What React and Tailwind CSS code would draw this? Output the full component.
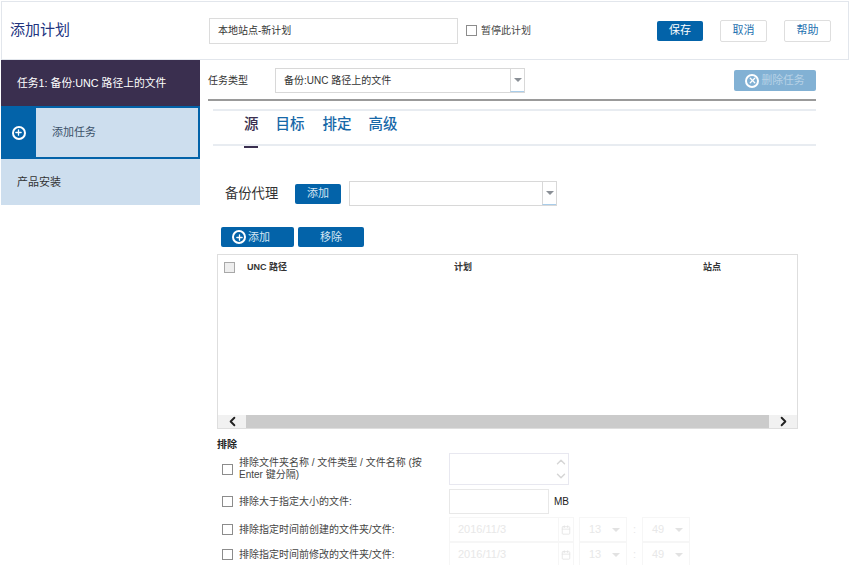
import React from 'react';
import { ChevronLeft, ChevronRight, ChevronUp, ChevronDown, Calendar, Plus, X } from 'lucide-react';

const font = { fontFamily: '"Liberation Sans", "Noto Sans CJK SC", sans-serif' };

function Caret({ className = 'border-t-[#8a8f96]' }) {
  return <span className={`block w-0 h-0 border-x-[4px] border-x-transparent border-t-[4px] ${className}`} />;
}

function CircleIcon({ icon: Icon, size = 14, className = '' }) {
  return (
    <span className={`inline-flex items-center justify-center rounded-full border-2 border-white ${className}`} style={{ width: size, height: size }}>
      <Icon size={size - 5} strokeWidth={3.5} className="text-white" />
    </span>
  );
}

function Combo({ w, text }) {
  return (
    <div className={`${w} h-[25px] flex border border-[#d8d8d8] bg-white`}>
      <div className="flex-1 pl-[8px] text-[10px] leading-[23px] text-[#333]">{text}</div>
      <div className="w-[14px] border-l border-[#d8d8d8] border-b border-b-[#a9cdea] flex items-center justify-center">
        <Caret />
      </div>
    </div>
  );
}

function Check({ size = 'w-[11px] h-[11px]', className = 'border-[#8c8c8c]' }) {
  return <span className={`block shrink-0 border bg-white ${size} ${className}`} />;
}

function TimePicker() {
  return (
    <div className="flex items-center h-[25px] text-[11px] text-[#e8e8e8]">
      <div className="w-[110px] h-full pl-[8px] border border-[#f6f6f6] leading-[23px]">2016/11/3</div>
      <div className="w-[15px] h-full border border-l-0 border-[#f6f6f6] flex items-center justify-center">
        <Calendar size={10} className="text-[#e2e2e2]" />
      </div>
      <div className="ml-[5px] w-[48px] h-full border border-[#f6f6f6] flex items-center justify-between pl-[9px] pr-[6px]">
        13<Caret className="border-t-[#e2e2e2]" />
      </div>
      <span className="w-[15px] text-center">:</span>
      <div className="w-[48px] h-full border border-[#f6f6f6] flex items-center justify-between pl-[9px] pr-[6px]">
        49<Caret className="border-t-[#e2e2e2]" />
      </div>
    </div>
  );
}

export default function App() {
  return (
    <div className="w-[850px] h-[565px] overflow-hidden bg-white" style={font}>
      <header className="ml-[1px] mt-[1px] w-[848px] h-[59px] border border-[#e2e6ec] flex items-center">
        <h1 className="ml-[8px] w-[199px] text-[15px] text-[#22347f]">添加计划</h1>
        <div className="w-[249px] h-[26px] border border-[#dcdcdc] pl-[8px] text-[10px] leading-[24px] text-[#333]">本地站点-新计划</div>
        <label className="ml-[8px] w-[65px] flex items-center gap-[4px] text-[10px] text-[#444]">
          <Check />暂停此计划
        </label>
        <button className="ml-[126px] w-[46px] h-[20px] rounded-[2px] bg-[#0363a9] text-white text-[11px]">保存</button>
        <button className="ml-[17px] w-[47px] h-[22px] rounded-[2px] border border-[#dedede] text-[#1f72b0] text-[11px]">取消</button>
        <button className="ml-[17px] w-[47px] h-[22px] rounded-[2px] border border-[#dedede] text-[#1f72b0] text-[11px]">帮助</button>
      </header>

      <div className="flex">
        <aside className="ml-[1px] w-[199px] shrink-0">
          <div className="h-[46px] bg-[#3a2f4f] text-white text-[10.8px] leading-[46px] pl-[16px]">任务1: 备份:UNC 路径上的文件</div>
          <div className="h-[53px] flex border-2 border-[#0363a9] border-l-0 bg-[#cddeee]">
            <div className="w-[35px] bg-[#0363a9] flex items-center justify-center">
              <CircleIcon icon={Plus} />
            </div>
            <div className="pl-[16px] text-[11px] leading-[49px] text-[#3a5068]">添加任务</div>
          </div>
          <div className="h-[46px] bg-[#cddeee] pl-[16px] text-[11px] leading-[46px] text-[#333]">产品安装</div>
        </aside>

        <main className="ml-[8px] w-[608px]">
          <div className="mt-[8px] flex items-center">
            <span className="w-[67px] text-[10px] text-[#333]">任务类型</span>
            <Combo w="w-[250px]" text="备份:UNC 路径上的文件" />
            <button className="ml-[209px] w-[82px] h-[21px] rounded-[2px] bg-[#82b1d4] text-[#b7d2e6] text-[10.8px] flex items-center justify-center gap-[2px]">
              <CircleIcon icon={X} />删除任务
            </button>
          </div>
          <div className="mt-[6px] h-[2px] bg-[#9a9a9a]" />

          <div className="ml-[5px] mt-[8px] h-[37px] pb-[5px] border-y-2 border-[#e8ecf1] flex items-center text-[14.5px] font-medium text-[#1768a8]">
            <span className="ml-[31px] text-[#3a2f4f] relative">
              源
              <span className="absolute left-0 -bottom-[12px] w-[14px] h-[2px] bg-[#3a2f4f]" />
            </span>
            <span className="ml-[17px]">目标</span>
            <span className="ml-[18px]">排定</span>
            <span className="ml-[17px]">高级</span>
          </div>

          <div className="mt-[35px] ml-[17px] flex items-center">
            <span className="w-[70px] text-[13.3px] text-[#333]">备份代理</span>
            <button className="w-[46px] h-[20px] rounded-[2px] bg-[#0363a9] text-[#d5e6f3] text-[11px]">添加</button>
            <div className="ml-[8px]"><Combo w="w-[208px]" text="" /></div>
          </div>

          <div className="mt-[21px] ml-[13px] flex gap-[4px]">
            <button className="w-[73px] h-[20px] rounded-[2px] bg-[#0363a9] pl-[11px] text-[#d5e6f3] text-[11px] flex items-center gap-[2px]">
              <CircleIcon icon={Plus} />添加
            </button>
            <button className="w-[66px] h-[20px] rounded-[2px] bg-[#0363a9] text-[#d5e6f3] text-[11px]">移除</button>
          </div>

          <div className="mt-[7px] ml-[9px] w-[581px] h-[175px] border border-[#dedede] flex flex-col">
            <div className="h-[25px] flex items-center text-[9px] font-bold text-[#333]">
              <span className="ml-[6px] w-[23px]"><Check className="border-[#a8a8a8] !bg-[#eeeeee]" /></span>
              <span className="w-[207px]">UNC 路径</span>
              <span className="w-[249px]">计划</span>
              <span>站点</span>
            </div>
            <div className="flex-1" />
            <div className="h-[13px] flex items-center bg-[#f1f1f1]">
              <div className="w-[28px] flex justify-center"><ChevronLeft size={15} strokeWidth={3} className="text-[#222]" /></div>
              <div className="flex-1 h-full bg-[#cbcbcb]" />
              <div className="w-[28px] flex justify-center"><ChevronRight size={15} strokeWidth={3} className="text-[#222]" /></div>
            </div>
          </div>

          <div className="ml-[9px] mt-[9px] text-[10px] font-bold leading-[14px] text-[#222]">排除</div>
          <div className="ml-[9px] mt-[1px] text-[10px] text-[#444]">
            <div className="flex items-center h-[32px]">
              <span className="ml-[5px] w-[17px]"><Check /></span>
              <span className="w-[188px] leading-[12px]">排除文件夹名称 / 文件类型 / 文件名称 (按 Enter 键分隔)</span>
              <div className="ml-[22px] w-[120px] h-[32px] border border-[#e8e8f0] flex justify-end">
                <div className="w-[14px] flex flex-col items-center justify-center text-[#d6d6d6]">
                  <ChevronUp size={14} strokeWidth={2.5} />
                  <ChevronDown size={14} strokeWidth={2.5} />
                </div>
              </div>
            </div>
            <div className="mt-[4px] flex items-center h-[25px]">
              <span className="ml-[5px] w-[17px]"><Check /></span>
              <span className="w-[210px]">排除大于指定大小的文件:</span>
              <div className="w-[100px] h-full border border-[#e8e8e8]" />
              <span className="ml-[5px] text-[#222]">MB</span>
            </div>
            <div className="mt-[3px] flex items-center h-[25px]">
              <span className="ml-[5px] w-[17px]"><Check /></span>
              <span className="w-[210px]">排除指定时间前创建的文件夹/文件:</span>
              <TimePicker />
            </div>
            <div className="flex items-center h-[25px]">
              <span className="ml-[5px] w-[17px]"><Check /></span>
              <span className="w-[210px]">排除指定时间前修改的文件夹/文件:</span>
              <TimePicker />
            </div>
          </div>
        </main>
      </div>
    </div>
  );
}
